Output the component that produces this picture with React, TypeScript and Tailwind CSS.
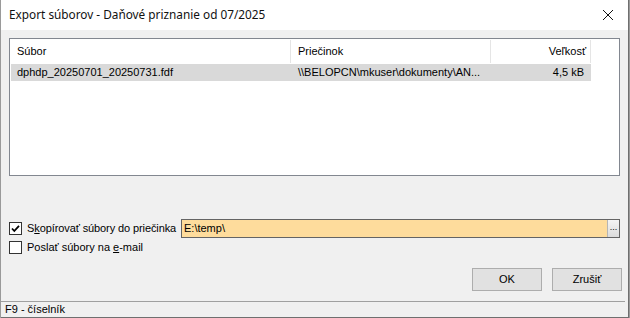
import React from 'react';

const ui = "font-['Liberation_Sans',Arial,sans-serif] text-[11px] text-black";

const CheckBox: React.FC<{ checked?: boolean }> = ({ checked }) => (
  <span className="w-[13px] h-[13px] border border-[#333333] bg-white flex items-center justify-center shrink-0">
    {checked && (
      <svg width="11" height="11" viewBox="0 0 11 11">
        <path d="M2 5.5 L4.3 8 L9 2.8" fill="none" stroke="#000" strokeWidth="1.8" />
      </svg>
    )}
  </span>
);

export default function App() {
  return (
    <div className={`w-[630px] h-[318px] bg-[#9a9a9a] pl-px ${ui}`}>
      <div className="w-[628px] h-[318px] border-r border-b border-[#6f6f6f] bg-[#f0f0f0] flex flex-col">
        {/* Title bar */}
        <div className="h-[30px] bg-white flex items-center justify-between pl-[8px] pr-[14px] shrink-0">
          <span className="font-['Noto_Sans',sans-serif] text-[11.8px] text-[#111]">
            Export súborov - Daňové priznanie od 07/2025
          </span>
          <svg width="12" height="12" viewBox="0 0 12 12">
            <path d="M1 1 L11 11 M11 1 L1 11" stroke="#111" strokeWidth="1" />
          </svg>
        </div>

        {/* File list */}
        <div className="mx-[8px] mt-[8px] h-[138px] border border-[#828790] bg-white p-px">
          <div className="flex h-[23px] items-center">
            <div className="w-[280px] h-full border-r border-[#e5e5e5] pl-[6px] flex items-center">Súbor</div>
            <div className="w-[200px] h-full border-r border-[#e5e5e5] pl-[7px] flex items-center">Priečinok</div>
            <div className="w-[100px] h-full border-r border-[#e5e5e5] pr-[4px] flex items-center justify-end">Veľkosť</div>
          </div>
          <div className="flex h-[17px] items-center bg-[#d9d9d9] w-[580px] mt-px">
            <div className="w-[280px] pl-[6px]">dphdp_20250701_20250731.fdf</div>
            <div className="w-[200px] pl-[7px] whitespace-nowrap overflow-hidden">\\BELOPCN\mkuser\dokumenty\AN...</div>
            <div className="w-[100px] pr-[7px] text-right">4,5 kB</div>
          </div>
        </div>

        {/* Options */}
        <div className="mx-[8px] mt-[43px] flex flex-col gap-[4px]">
          <div className="flex items-center h-[18px]">
            <div className="flex items-center gap-[5px] w-[172px]">
              <CheckBox checked />
              <span className="tracking-[-0.1px]">
                S<span className="underline">k</span>opírovať súbory do priečinka
              </span>
            </div>
            <div className="flex-1 h-[19px] border border-[#646464] bg-[#fedc9c] flex items-stretch">
              <div className="flex-1 pl-[2px] flex items-center">E:\temp\</div>
              <div className="w-[12px] bg-gradient-to-b from-[#f4f4f4] to-[#dcdcdc] border-l border-[#b5b5b5] flex items-center justify-center text-[9px] leading-none pb-[2px]">
                ...
              </div>
            </div>
          </div>
          <div className="flex items-center gap-[5px] h-[13px]">
            <CheckBox />
            <span>
              Poslať súbory na <span className="underline">e</span>-mail
            </span>
          </div>
        </div>

        {/* Buttons */}
        <div className="mt-[14px] mr-[6px] flex justify-end gap-[10px]">
          <button className="w-[70px] h-[23px] bg-[#e1e1e1] border border-[#adadad]">OK</button>
          <button className="w-[70px] h-[23px] bg-[#e1e1e1] border border-[#adadad]">Zrušiť</button>
        </div>

        <div className="flex-1" />

        {/* Status bar */}
        <div className="h-[16px] border-t border-[#a0a0a0] pl-[4px] flex items-center mr-[3px]">
          F9 - číselník
        </div>
      </div>
    </div>
  );
}
